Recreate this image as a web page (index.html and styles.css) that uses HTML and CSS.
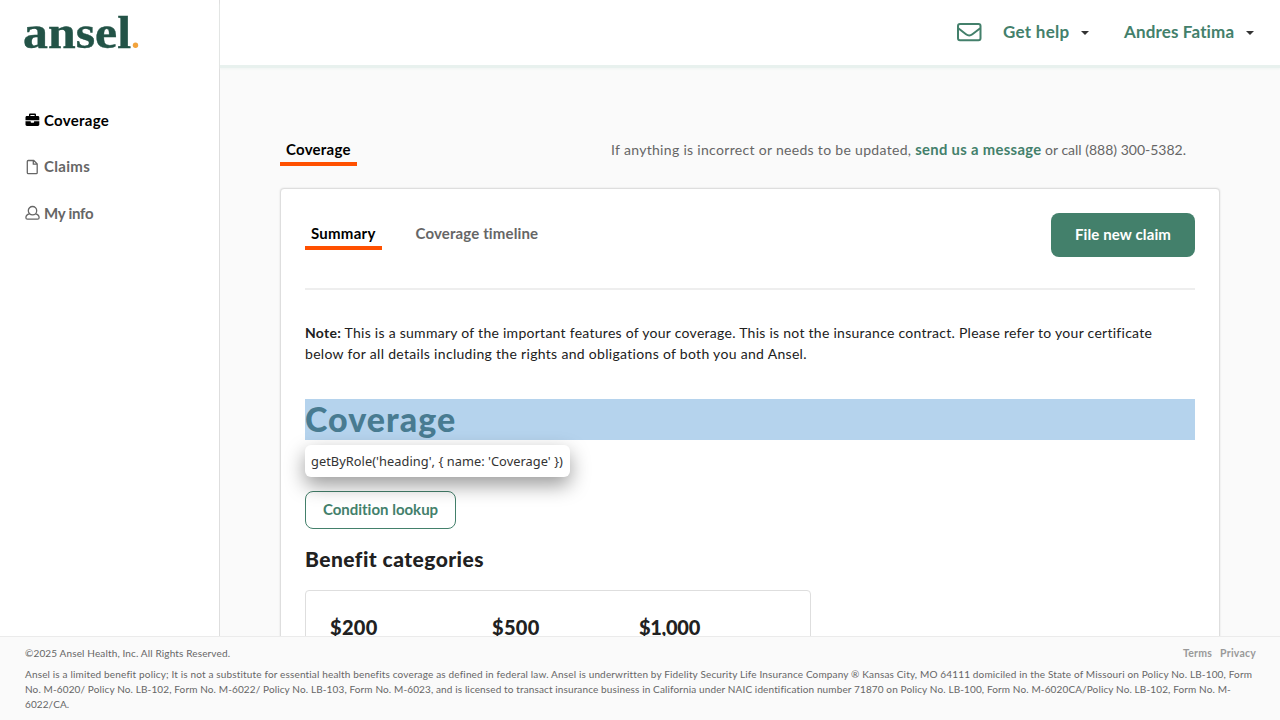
FILE: index.html
```html
<!DOCTYPE html>
<html lang="en">
<head>
<meta charset="utf-8">
<title>Ansel - Coverage</title>
<link rel="stylesheet" href="styles.css">
</head>
<body>
<div class="app">
  <aside class="sidebar">
    <svg class="logo" width="116" height="40" viewBox="0 0 116 40" role="img" aria-label="ansel">
      <text class="logo-text" x="-1" y="34.5" textLength="108" lengthAdjust="spacingAndGlyphs">ansel</text>
      <circle cx="111.5" cy="32.200" r="2.700" fill="#f2a33c"/>
    </svg>
    <nav class="side-nav">
      <a class="side-link active">
        <svg width="15" height="14" viewBox="0 0 15 14"><path fill="currentColor" fill-rule="evenodd" d="M4 3V1.8C4 1 4.6.6 5.3.6h4.4c.8 0 1.3.4 1.3 1.2V3h1.9c.8 0 1.4.6 1.4 1.4V7.300H.5V4.400C.5 3.600 1.100 3 1.900 3zM5.400 3h4.200V2H5.400zM.5 8.200h5.200v.9c0 .4.200.6.600.6h2.200c.4 0 .6-.2.6-.6v-.9h5.200v3.400c0 .8-.6 1.400-1.400 1.400h-11c-.8 0-1.400-.6-1.400-1.400z"/></svg>
        <span class="s-cov">Coverage</span>
      </a>
      <a class="side-link">
        <svg width="15" height="16" viewBox="0 0 15 16"><path fill="none" stroke="currentColor" stroke-width="1.300" stroke-linejoin="round" d="M3.300 1.500h5.500l3.400 3.400v8.800c0 .6-.4 1-1 1H3.300c-.6 0-1-.4-1-1V2.500c0-.6.4-1 1-1zM8.300 1.700v3.500h3.800"/></svg>
        <span class="s-claims">Claims</span>
      </a>
      <a class="side-link">
        <svg width="15" height="16" viewBox="0 0 15 16"><g fill="none" stroke="currentColor" stroke-width="1.300"><circle cx="7.500" cy="5.700" r="4.200"/><path d="M4.500 8.800C2 9.300.9 10.700.9 12.700c0 .9.600 1.500 1.500 1.500h10.200c.9 0 1.500-.6 1.500-1.500 0-2-1.100-3.400-3.600-3.900"/></g></svg>
        <span class="s-info">My info</span>
      </a>
    </nav>
  </aside>
  <div class="main">
    <header class="topbar">
      <svg class="mail" width="26" height="20" viewBox="0 0 26 20"><g fill="none" stroke="currentColor" stroke-width="2"><rect x="2" y="2" width="22.500" height="16.300" rx="2"/><path d="M2.300 6.200l7.700 6c2.200 1.700 4.200 1.700 6.400 0l7.800-6"/></g></svg>
      <a class="top-link help">Get help</a><i class="caret"></i>
      <a class="top-link user">Andres Fatima</a><i class="caret"></i>
    </header>
    <main class="content">
      <div class="page-head">
        <a class="tab active">Coverage</a>
        <p class="contact"><span class="c1">If anything is incorrect or needs to be updated, </span><a>send us a message</a> or call (888) 300-5382.</p>
      </div>
      <section class="card">
        <div class="card-head">
          <a class="tab active">Summary</a>
          <a class="tab timeline">Coverage timeline</a>
          <button class="primary">File new claim</button>
        </div>
        <p class="note"><b>Note:</b> This is a summary of the important features of your coverage. This is not the insurance contract. Please refer to your certificate<br><span class="n2">below for all details including the rights and obligations of both you and Ansel.</span></p>
        <div class="title-row">
          <h1 class="title">Coverage</h1>
          <div class="tooltip">getByRole('heading', { name: 'Coverage' })</div>
        </div>
        <button class="lookup">Condition lookup</button>
        <h2 class="subtitle">Benefit categories</h2>
        <div class="benefits"><span>$200</span><span>$500</span><span class="wide">$1,000</span></div>
      </section>
    </main>
  </div>
</div>
<footer class="footer">
  <div class="legal"><span class="copy">©2025 Ansel Health, Inc. All Rights Reserved.</span><span class="links"><a>Terms</a><a>Privacy</a></span></div>
  <p class="fine"><span class="f1">Ansel is a limited benefit policy; It is not a substitute for essential health benefits coverage as defined in federal law. Ansel is underwritten by Fidelity Security Life Insurance Company ® Kansas City, MO 64111 domiciled in the State of Missouri on Policy No. LB-100, Form</span><br><span class="f2">No. M-6020/ Policy No. LB-102, Form No. M-6022/ Policy No. LB-103, Form No. M-6023, and is licensed to transact insurance business in California under NAIC identification number 71870 on Policy No. LB-100, Form No. M-6020CA/Policy No. LB-102, Form No. M-</span><br><span class="f3">6022/CA.</span></p>
</footer>
</body>
</html>
```
FILE: styles.css
```css
* { box-sizing: border-box; }
body {
  margin: 0;
  height: 720px;
  display: flex;
  flex-direction: column;
  overflow: hidden;
  font-family: Lato, "Open Sans", sans-serif;
  font-size: 14px;
  line-height: 21px;
  font-variant-ligatures: none;
  color: #212121;
  background: #fafafa;
}
p, h1, h2 { margin: 0; }
a, span, p { white-space: nowrap; }
button { font: inherit; white-space: nowrap; padding: 0; }

.app { flex: 1; min-height: 0; display: flex; overflow: hidden; }
.sidebar { width: 220px; flex: none; background: #fff; border-right: 1px solid #dedede; padding: 13px 0 0 24px; }
.logo { display: block; overflow: visible; }
.logo-text { font-family: "Liberation Serif", serif; font-size: 47px; font-weight: 700; fill: #235347; stroke: #235347; stroke-width: .4px; }
.side-nav { display: flex; flex-direction: column; gap: 25.500px; padding-top: 56.500px; }
.side-link { display: flex; align-items: center; gap: 4px; padding-left: 1px; font-size: 15px; font-weight: 700; color: #666; }
.side-link.active { color: #000; }
.s-cov { letter-spacing: .3px; }
.s-claims { letter-spacing: .3px; }
.s-info { letter-spacing: -.25px; }

.main { flex: 1; min-width: 0; }
.topbar { height: 65px; display: flex; align-items: center; justify-content: flex-end; padding: 0 26px 0 0; background: #fff; box-shadow: 0 3px 0 #e8f1ee, 0 4px 2px #eff4f2; color: #43806b; }
.mail { margin: 0 21px 1px 0; }
.top-link { font-size: 17px; font-weight: 700; padding-bottom: 2px; }
.help { width: 66px; margin-right: 12px; letter-spacing: .27px; }
.user { width: 110px; margin: 0 12px 0 35px; letter-spacing: .15px; }
.caret { border: 4px solid transparent; border-top-color: #333; border-bottom: 0; }

.content { padding: 74px 60px 0; }
.page-head { display: flex; justify-content: space-between; padding-right: 34px; }
.tab { padding: 0 6px; height: 27px; font-size: 15px; font-weight: 700; color: #666; letter-spacing: .14px; }
.tab.active { width: 76.500px; border-bottom: 4px solid #ff5000; color: #000; letter-spacing: .25px; }
.contact { color: #666; }
.c1 { letter-spacing: .31px; }
.contact a { color: #43806b; font-size: 14.800px; font-weight: 700; letter-spacing: .33px; }

.card { margin-top: 22px; height: 560px; border: 1px solid #dedede; border-radius: 4px; background: #fff; padding: 24px; box-shadow: 0 0 2px rgba(0,0,0,.12); }
.card-head { display: flex; height: 77px; border-bottom: 2px solid #eee; }
.card-head .tab { margin-top: 10px; }
.timeline { margin-left: 28px; }
.primary { margin-left: auto; width: 144px; height: 44px; padding-bottom: 2px; border: 0; border-radius: 8px; background: #43806b; color: #fff; font-size: 15px; font-weight: 700; letter-spacing: .12px; }
.note { margin-top: 32px; letter-spacing: .27px; }
.n2 { letter-spacing: .31px; }
.title-row { position: relative; margin-top: 35px; height: 41px; background: #b5d3ed; }
.title { font-size: 34px; line-height: 40px; font-weight: 900; letter-spacing: 1.050px; color: #487b91; }
.tooltip { position: absolute; left: 0; top: 46px; width: 265px; height: 32px; padding: 0 6px; border-radius: 6px; background: #fff; box-shadow: 0 8px 20px rgba(0,0,0,.4); font: 12.800px/33px "Noto Sans", sans-serif; letter-spacing: .05px; white-space: nowrap; color: #333; }
.lookup { display: block; margin-top: 51px; width: 151px; height: 38px; padding-bottom: 2px; border: 1px solid #43806b; border-radius: 8px; background: transparent; color: #43806b; font-size: 15px; font-weight: 700; letter-spacing: 0; }
.subtitle { margin-top: 17px; font-size: 21px; line-height: 25px; font-weight: 900; letter-spacing: .45px; }
.benefits { display: grid; grid-template-columns: 162px 147px auto; width: 506px; height: 120px; margin-top: 19px; padding: 24px 24px; border: 1px solid #dedede; border-radius: 4px; font-size: 20px; line-height: 25px; font-weight: 900; letter-spacing: .3px; }
.wide { letter-spacing: -.300px; }

.footer { flex: none; height: 84px; border-top: 1px solid #ebebeb; background: #fafafa; padding: 9px 24px 0 25px; font-size: 10px; line-height: 15px; color: #666; }
.legal { display: flex; justify-content: space-between; }
.copy { letter-spacing: .14px; }
.links { display: flex; gap: 8px; font-size: 10.500px; font-weight: 700; letter-spacing: .22px; color: #999; }
.fine { margin-top: 6px; }
.f1 { letter-spacing: .158px; }
.f2 { letter-spacing: .125px; }
.f3 { letter-spacing: .1px; }
```
